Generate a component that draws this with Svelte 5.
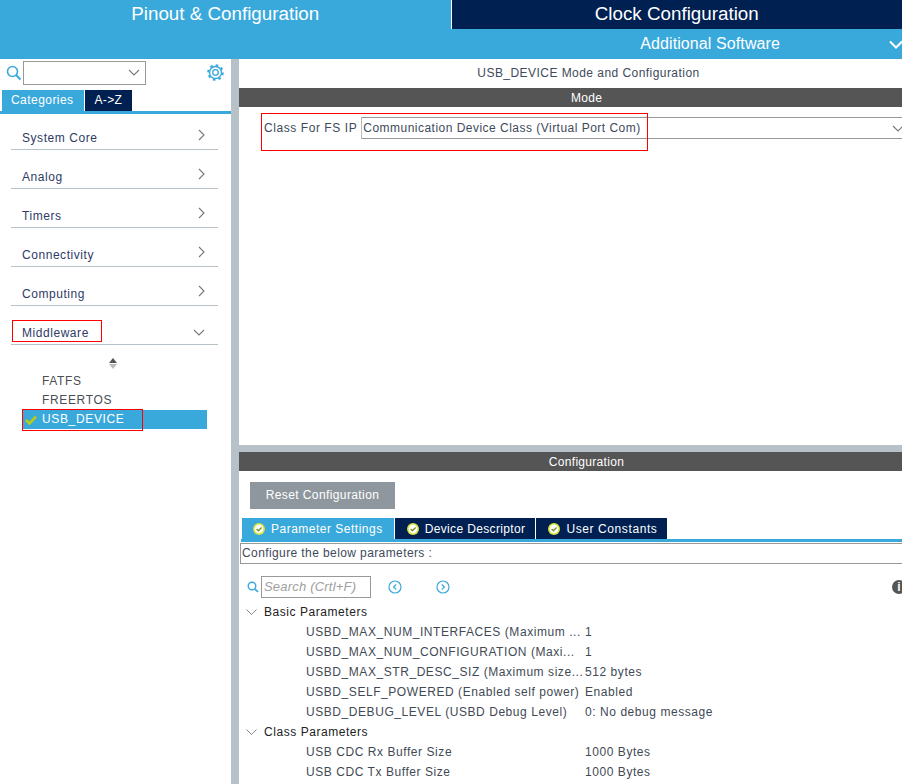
<script>
  const categories = ['System Core', 'Analog', 'Timers', 'Connectivity', 'Computing'];
  const basicParams = [
    ['USBD_MAX_NUM_INTERFACES (Maximum ...', '1'],
    ['USBD_MAX_NUM_CONFIGURATION (Maxi...', '1'],
    ['USBD_MAX_STR_DESC_SIZ (Maximum size...', '512 bytes'],
    ['USBD_SELF_POWERED (Enabled self power)', 'Enabled'],
    ['USBD_DEBUG_LEVEL (USBD Debug Level)', '0: No debug message']
  ];
  const classParams = [
    ['USB CDC Rx Buffer Size', '1000 Bytes'],
    ['USB CDC Tx Buffer Size', '1000 Bytes']
  ];
  const configTabs = ['Parameter Settings', 'Device Descriptor', 'User Constants'];
</script>

<div class="app">
  <header>
    <div class="top-tabs">
      <div class="top-tab active">Pinout &amp; Configuration</div>
      <div class="top-tab">Clock Configuration</div>
    </div>
    <div class="sub-bar">
      <span class="additional">Additional Software</span>
      <svg class="sub-chevron" width="14" height="9" viewBox="0 0 14 9"><path d="M1 1.5 7 7.5 13 1.5" fill="none" stroke="#fff" stroke-width="2"/></svg>
    </div>
  </header>

  <div class="body">
    <aside>
      <div class="search-row">
        <svg width="16" height="16" viewBox="0 0 16 16"><circle cx="6.5" cy="6.5" r="5" fill="none" stroke="#39a9dc" stroke-width="1.6"/><path d="M10 10 14.5 14.5" stroke="#39a9dc" stroke-width="2"/></svg>
        <div class="combo">
          <svg width="12" height="7" viewBox="0 0 12 7"><path d="M1 1 6 6 11 1" fill="none" stroke="#777" stroke-width="1.1"/></svg>
        </div>
        <svg class="gear" width="17" height="17" viewBox="0 0 17 17">
          <circle cx="8.5" cy="8.5" r="2.8" fill="none" stroke="#39a9dc" stroke-width="1.3"/>
          <circle cx="8.5" cy="8.5" r="6" fill="none" stroke="#39a9dc" stroke-width="1.4"/>
          <circle cx="8.5" cy="8.5" r="7.3" fill="none" stroke="#39a9dc" stroke-width="2" stroke-dasharray="2.6 3.13"/>
        </svg>
      </div>
      <div class="side-tabs">
        <div class="side-tab active">Categories</div>
        <div class="side-tab">A-&gt;Z</div>
      </div>
      <div class="cat-list">
        {#each categories as cat}
          <div class="cat">
            <span>{cat}</span>
            <svg width="7" height="12" viewBox="0 0 7 12"><path d="M1 1 6 6 1 11" fill="none" stroke="#777" stroke-width="1.1"/></svg>
          </div>
        {/each}
        <div class="cat">
          <span>Middleware</span>
          <svg width="12" height="7" viewBox="0 0 12 7"><path d="M1 1 6 6 11 1" fill="none" stroke="#777" stroke-width="1.1"/></svg>
          <div class="red-box mid-box"></div>
        </div>
      </div>
      <div class="sort-arrows"><i class="up"></i><i class="down"></i></div>
      <div class="mw-list">
        <div class="mw-item">FATFS</div>
        <div class="mw-item">FREERTOS</div>
        <div class="mw-item selected">
          <svg width="12" height="10" viewBox="0 0 12 10"><path d="M1 5 4.5 8.5 11 1.5" fill="none" stroke="#b5cc18" stroke-width="2.6"/></svg>
          USB_DEVICE
          <div class="red-box usb-box"></div>
        </div>
      </div>
    </aside>

    <div class="splitter"></div>

    <main>
      <section class="mode">
        <div class="title">USB_DEVICE Mode and Configuration</div>
        <div class="bar">Mode</div>
        <div class="class-row">
          <label for="fs-class">Class For FS IP</label>
          <div class="class-select" id="fs-class">
            Communication Device Class (Virtual Port Com)
            <svg width="12" height="7" viewBox="0 0 12 7"><path d="M1 1 6 6 11 1" fill="none" stroke="#777" stroke-width="1.1"/></svg>
          </div>
          <div class="red-box class-box"></div>
        </div>
      </section>

      <section class="config">
        <div class="bar">Configuration</div>
        <button class="reset">Reset Configuration</button>
        <div class="config-tabs">
          {#each configTabs as tab, i}
            <div class="config-tab" class:active={i === 0}>
              <svg width="12" height="12" viewBox="0 0 12 12"><circle cx="6" cy="6" r="6" fill="#d8e23a"/><circle cx="6" cy="6" r="4.4" fill="#fff"/><path d="M3.6 6 5.4 7.8 8.6 4.4" fill="none" stroke="#7d8f2a" stroke-width="1.4"/></svg>
              {tab}
            </div>
          {/each}
        </div>
        <div class="config-note">Configure the below parameters :</div>
        <div class="param-search">
          <svg width="12" height="12" viewBox="0 0 12 12"><circle cx="5" cy="5" r="3.8" fill="none" stroke="#39a9dc" stroke-width="1.4"/><path d="M7.8 7.8 11 11" stroke="#39a9dc" stroke-width="1.7"/></svg>
          <div class="search-input">Search (Crtl+F)</div>
          <svg class="nav" width="14" height="14" viewBox="0 0 14 14"><circle cx="7" cy="7" r="6" fill="none" stroke="#39a9dc" stroke-width="1.2"/><path d="M8.2 4.5 5.6 7 8.2 9.5" fill="none" stroke="#39a9dc" stroke-width="1.2"/></svg>
          <svg class="nav" width="14" height="14" viewBox="0 0 14 14"><circle cx="7" cy="7" r="6" fill="none" stroke="#39a9dc" stroke-width="1.2"/><path d="M5.8 4.5 8.4 7 5.8 9.5" fill="none" stroke="#39a9dc" stroke-width="1.2"/></svg>
          <div class="info">i</div>
        </div>
        <div class="group">
          <svg width="11" height="6" viewBox="0 0 11 6"><path d="M.5.5 5.5 5.5 10.5.5" fill="none" stroke="#888" stroke-width="1"/></svg>
          Basic Parameters
        </div>
        {#each basicParams as [name, value]}
          <div class="param"><span>{name}</span><span>{value}</span></div>
        {/each}
        <div class="group">
          <svg width="11" height="6" viewBox="0 0 11 6"><path d="M.5.5 5.5 5.5 10.5.5" fill="none" stroke="#888" stroke-width="1"/></svg>
          Class Parameters
        </div>
        {#each classParams as [name, value]}
          <div class="param"><span>{name}</span><span>{value}</span></div>
        {/each}
      </section>
    </main>
  </div>
</div>

<style>
  :global(body) {
    margin: 0;
    overflow: hidden;
  }
  .app {
    width: 902px;
    height: 784px;
    display: flex;
    flex-direction: column;
    overflow: hidden;
    background: #fff;
    font-family: "Liberation Sans", Arial, sans-serif;
    font-size: 12px;
    letter-spacing: 0.3px;
    color: #3e4a5a;
  }
  .top-tabs {
    display: flex;
    height: 29px;
    background: #fff;
    gap: 1px;
  }
  .top-tab {
    flex: 1;
    background: #002052;
    color: #fff;
    font-size: 18.8px;
    letter-spacing: 0;
    line-height: 28px;
    text-align: center;
  }
  .top-tab.active {
    background: #39a9dc;
  }
  .sub-bar {
    height: 30px;
    background: #39a9dc;
    display: flex;
    align-items: center;
    justify-content: flex-end;
    color: #fff;
  }
  .additional {
    font-size: 16px;
    margin-right: 109px;
    letter-spacing: 0.1px;
  }
  .sub-chevron {
    margin-right: -1px;
  }
  .body {
    flex: 1;
    display: flex;
    min-height: 0;
  }
  aside {
    width: 231px;
    flex: none;
  }
  .splitter {
    width: 8px;
    flex: none;
    background: #b6c1c8;
  }
  .search-row {
    display: flex;
    align-items: center;
    height: 27px;
    padding: 0 6px;
    box-sizing: border-box;
  }
  .combo {
    width: 123px;
    height: 24px;
    margin-left: 1px;
    border: 1px solid #999;
    box-sizing: border-box;
    display: flex;
    align-items: center;
    justify-content: flex-end;
    padding-right: 5px;
  }
  .gear {
    margin-left: auto;
    margin-right: 1px;
  }
  .side-tabs {
    display: flex;
    gap: 1px;
    margin: 4px 0 0 2px;
    height: 21px;
  }
  .side-tab {
    background: #002052;
    color: #fff;
    line-height: 21px;
    padding: 0 10px;
  }
  .side-tab.active {
    background: #39a9dc;
    padding: 0 10px 0 9px;
    letter-spacing: 0.45px;
  }
  .cat-list {
    border-top: 3px solid #39a9dc;
    padding: 0 13px 0 11px;
  }
  .cat {
    height: 39px;
    border-bottom: 1px solid #b6c1c8;
    box-sizing: border-box;
    display: flex;
    align-items: flex-end;
    justify-content: space-between;
    padding: 0 13px 4px 11px;
    color: #2f3a66;
    letter-spacing: 0.55px;
    position: relative;
  }
  .cat:first-child {
    height: 36px;
  }
  .cat svg {
    margin-bottom: 4px;
  }
  .red-box {
    position: absolute;
    border: 1px solid #f00;
    box-sizing: border-box;
    pointer-events: none;
  }
  .mid-box {
    left: 1px;
    top: 14px;
    width: 90px;
    height: 22px;
  }
  .sort-arrows {
    display: flex;
    flex-direction: column;
    align-items: center;
    gap: 1px;
    width: 226px;
    margin-top: 13px;
  }
  .sort-arrows i {
    width: 0;
    height: 0;
    border-left: 4px solid transparent;
    border-right: 4px solid transparent;
  }
  .sort-arrows .up {
    border-bottom: 5px solid #555;
  }
  .sort-arrows .down {
    border-top: 5px solid #bbb;
  }
  .mw-list {
    margin: 3px 24px 0 23px;
    letter-spacing: 0.65px;
  }
  .mw-item {
    height: 19px;
    line-height: 19px;
    padding-left: 19px;
    position: relative;
    color: #4a4f55;
  }
  .mw-item.selected {
    background: #39a9dc;
    color: #fff;
    display: flex;
    align-items: center;
    padding-left: 2px;
    gap: 5px;
  }
  .usb-box {
    left: -1px;
    top: -1px;
    width: 121px;
    height: 22px;
  }
  main {
    flex: 1;
    min-width: 0;
    display: flex;
    flex-direction: column;
  }
  .mode {
    height: 386px;
    border-bottom: 7px solid #b6c1c8;
    flex: none;
  }
  .title {
    height: 29px;
    line-height: 29px;
    text-align: center;
    padding-left: 36px;
    letter-spacing: 0.45px;
  }
  .bar {
    height: 19px;
    line-height: 20px;
    background: #555;
    color: #fff;
    text-align: center;
    padding-left: 32px;
  }
  .class-row {
    position: relative;
    display: flex;
    align-items: center;
    margin-top: 10px;
    padding-left: 25px;
    height: 22px;
  }
  .class-row label {
    margin-right: 4px;
    letter-spacing: 0.57px;
  }
  .class-select {
    flex: 1;
    height: 22px;
    border-top: 1px solid #999;
    border-bottom: 1px solid #999;
    border-left: 1px solid #bbb;
    box-sizing: border-box;
    display: flex;
    align-items: center;
    justify-content: space-between;
    padding-left: 1px;
    margin-right: -10px;
    line-height: 20px;
    letter-spacing: 0.48px;
  }
  .class-select svg {
    margin-right: 8px;
  }
  .class-box {
    left: 22px;
    top: -4px;
    width: 387px;
    height: 38px;
  }
  .config {
    flex: 1;
    min-height: 0;
    position: relative;
  }
  .reset {
    display: block;
    margin: 11px 0 0 11px;
    width: 145px;
    height: 27px;
    background: #8f979e;
    border: none;
    color: #fff;
    font: inherit;
    letter-spacing: 0.4px;
    padding: 0 0 1px;
  }
  .config-tabs {
    display: flex;
    gap: 1px;
    margin: 9px 0 0 3px;
    height: 21px;
  }
  .config-tab {
    background: #002052;
    color: #fff;
    display: flex;
    align-items: center;
    gap: 6px;
    padding: 0 10px 0 12px;
    letter-spacing: 0.35px;
  }
  .config-tab.active {
    background: #39a9dc;
    padding: 0 11px;
    letter-spacing: 0.5px;
  }
  .config-tab:last-child {
    letter-spacing: 0.6px;
  }
  .config-note {
    border-top: 3px solid #39a9dc;
    height: 22px;
    position: relative;
    margin-left: 2px;
    line-height: 23px;
    padding-left: 1px;
    letter-spacing: 0.4px;
  }
  .config-note::after {
    content: "";
    position: absolute;
    inset: 1px 0 0 0;
    border: 1px solid #999;
    border-right: none;
    margin-left: -1px;
  }
  .param-search {
    display: flex;
    align-items: center;
    height: 22px;
    margin: 12px 0 0 8px;
  }
  .search-input {
    width: 110px;
    height: 22px;
    box-sizing: border-box;
    border: 1px solid #999;
    margin-left: 2px;
    line-height: 20px;
    padding-left: 2px;
    color: #a0a0a0;
    font-style: italic;
    font-size: 13px;
    letter-spacing: 0.2px;
  }
  .nav {
    margin-left: 17px;
  }
  .nav + .nav {
    margin-left: 34px;
  }
  .info {
    position: absolute;
    right: -4px;
    width: 14px;
    height: 14px;
    border-radius: 50%;
    background: #555;
    color: #fff;
    font-weight: bold;
    font-size: 12px;
    line-height: 14px;
    text-align: center;
    letter-spacing: 0;
  }
  .group {
    height: 20px;
    line-height: 20px;
    margin-top: 4px;
    padding-left: 7px;
    display: flex;
    align-items: center;
    gap: 7px;
    color: #222;
    letter-spacing: 0.55px;
  }
  .param + .group {
    margin-top: 0;
  }
  .param {
    height: 20px;
    line-height: 20px;
    padding-left: 67px;
    display: flex;
    color: #3f4a55;
    letter-spacing: 0.56px;
  }
  .param span:first-child {
    width: 279px;
    white-space: nowrap;
    flex: none;
  }
</style>
